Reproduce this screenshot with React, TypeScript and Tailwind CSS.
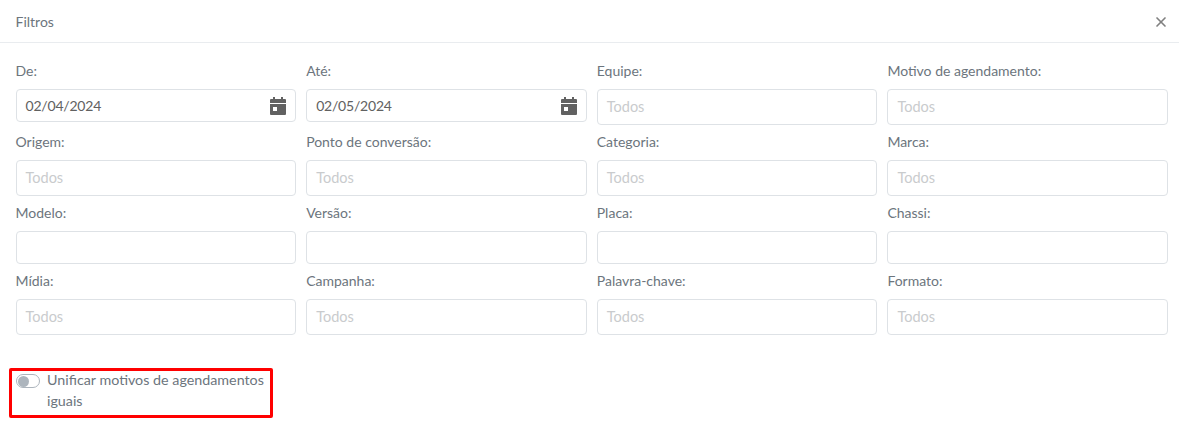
import { X } from "lucide-react";

type Field = {
  label: string;
  value?: string;
  placeholder?: string;
  date?: boolean;
};

const fields: Field[] = [
  { label: "De:", value: "02/04/2024", date: true },
  { label: "Até:", value: "02/05/2024", date: true },
  { label: "Equipe:", placeholder: "Todos" },
  { label: "Motivo de agendamento:", placeholder: "Todos" },
  { label: "Origem:", placeholder: "Todos" },
  { label: "Ponto de conversão:", placeholder: "Todos" },
  { label: "Categoria:", placeholder: "Todos" },
  { label: "Marca:", placeholder: "Todos" },
  { label: "Modelo:" },
  { label: "Versão:" },
  { label: "Placa:" },
  { label: "Chassi:" },
  { label: "Mídia:", placeholder: "Todos" },
  { label: "Campanha:", placeholder: "Todos" },
  { label: "Palavra-chave:", placeholder: "Todos" },
  { label: "Formato:", placeholder: "Todos" },
];

function CalendarIcon() {
  return (
    <svg width="16" height="18" viewBox="0 0 16 18" className="shrink-0">
      <path
        fill="#616161"
        fillRule="evenodd"
        d="M3 0h2v2h6V0h2v2h2a1 1 0 0 1 1 1v3H0V3a1 1 0 0 1 1-1h2V0ZM0 7h16v10a1 1 0 0 1-1 1H1a1 1 0 0 1-1-1V7Zm3 3v4h4v-4H3Z"
      />
    </svg>
  );
}

function FilterField({ field }: { field: Field }) {
  const isSelect = field.placeholder !== undefined;

  return (
    <div className="flex flex-col">
      <label className="mb-[8px] h-[20px] text-[14px] leading-[20px] text-[#6c757d]">
        {field.label}
      </label>
      <div
        className={`flex items-center justify-between rounded border border-[#dee2e6] bg-white pl-[9px] pr-[9px] ${
          isSelect ? "h-9" : "h-[33px]"
        }`}
      >
        {field.value && (
          <span className="text-[14px] tracking-[-0.2px] text-[#616161]">
            {field.value}
          </span>
        )}
        {field.placeholder && (
          <span className="text-[14.5px] text-[#c9cbcd]">{field.placeholder}</span>
        )}
        {field.date && <CalendarIcon />}
      </div>
    </div>
  );
}

export default function App() {
  return (
    <div className="h-[441px] w-[1179px] overflow-hidden bg-white font-['Lato','Noto_Sans',sans-serif]">
      <div className="flex h-[43px] items-center justify-between border-b border-[#e9ecef] pl-[15.5px] pr-[10px]">
        <span className="text-[14px] text-[#6c757d]">Filtros</span>
        <X size={16} strokeWidth={2.5} className="mt-px text-[#808080]" />
      </div>

      <div className="grid grid-cols-4 gap-x-[10px] pl-[15.5px] pr-[11px] pt-[18px] [grid-template-rows:71px_71px_68px_auto]">
        {fields.map((field) => (
          <FilterField key={field.label} field={field} />
        ))}
      </div>

      <div className="ml-[9px] mt-[33px] flex h-[50px] w-[264px] gap-[7px] rounded-[2px] border-[3px] border-[#ff0000] pl-1">
        <div className="mt-[3px] flex h-[14px] w-[24px] shrink-0 items-center rounded-full border border-[#adb5bd] px-px">
          <div className="h-[11px] w-[11px] rounded-full bg-[#adb5bd]" />
        </div>
        <span className="-mt-[2px] text-[14.3px] leading-[21px] text-[#6c757d]">
          Unificar motivos de agendamentos iguais
        </span>
      </div>
    </div>
  );
}
